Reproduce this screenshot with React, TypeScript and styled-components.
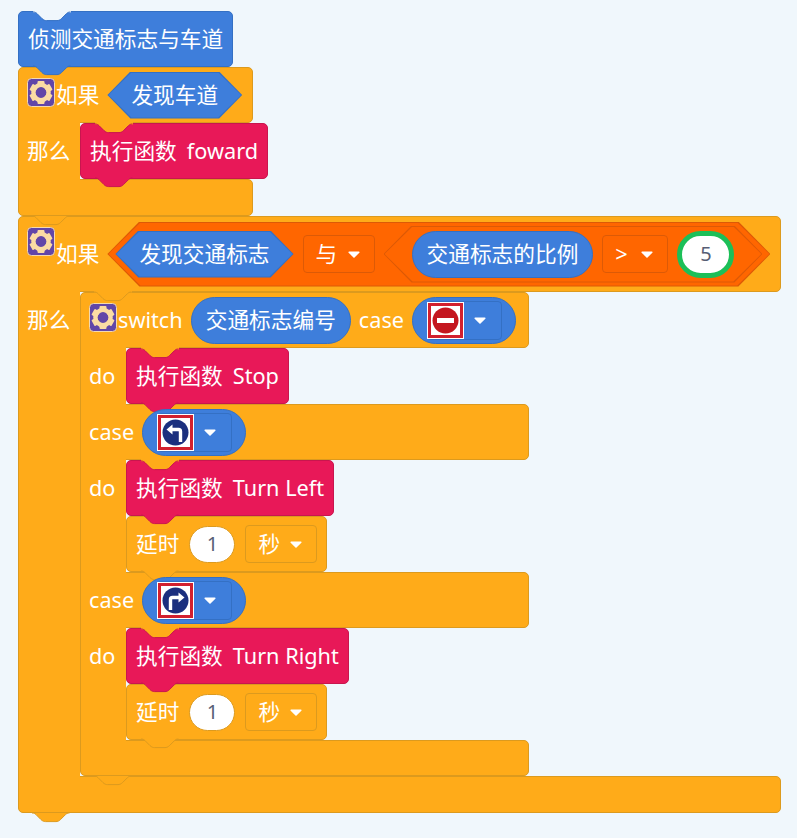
import React from 'react';
import styled, { createGlobalStyle } from 'styled-components';

const PAGE = '#f0f7fc';
const TONES = {
  control: { fill: '#ffab19', edge: '#dc9a1e' },
  sensing: { fill: '#3e7edb', edge: '#3470c4' },
  call: { fill: '#e81858', edge: '#c8164e' },
  logic: { fill: '#ff6600', edge: '#dc5a06' },
};
type Tone = keyof typeof TONES;

const CURVE = 'M0 1 C2 1 3 1.6 4 2.6 L9 7.6 C10.5 9.1 12 9.6 13.5 9.6 H24 C25.5 9.6 27 9.1 28.5 7.6 L33.5 2.6 C34.5 1.6 35.5 1 37.5 1';

const GlobalStyle = createGlobalStyle`
  html, body {
    margin: 0;
    background: ${PAGE};
  }
  * {
    box-sizing: border-box;
  }
`;

const Stage = styled.div`
  display: flex;
  flex-direction: column;
  align-items: flex-start;
  width: 797px;
  height: 838px;
  padding: 11px 0 0 18px;
  overflow: hidden;
  background: ${PAGE};
  color: #fff;
  font-family: 'Noto Sans', 'Noto Sans CJK SC', sans-serif;
  font-size: 21.7px;
  line-height: 1;
`;

const Block = styled.div<{ $tone: Tone; $pad?: number }>`
  position: relative;
  display: flex;
  align-items: center;
  gap: 10px;
  height: 56px;
  padding: 0 ${(p) => p.$pad ?? 9}px;
  background: ${(p) => TONES[p.$tone].fill};
  border: 1px solid ${(p) => TONES[p.$tone].edge};
  border-radius: 5px;
`;

const CBlock = styled.div<{ $width: number }>`
  position: relative;
  display: flex;
  flex-direction: column;
  width: ${(p) => p.$width}px;
`;

const Row = styled.div<{ $h?: number; $first?: boolean }>`
  display: flex;
  align-items: center;
  gap: 8px;
  height: ${(p) => p.$h ?? 56}px;
  padding-left: 8px;
  background: ${TONES.control.fill};
  border: 1px solid ${TONES.control.edge};
  border-radius: ${(p) => (p.$first ? '5px' : '0')} 5px 5px 0;
`;

const Arm = styled.div<{ $h: number }>`
  height: ${(p) => p.$h}px;
  background: ${TONES.control.fill};
  border: 1px solid ${TONES.control.edge};
  border-radius: 0 5px 5px 5px;
`;

const Body = styled.div`
  display: flex;
`;

const Gutter = styled.div<{ $width: number }>`
  position: relative;
  flex: none;
  width: ${(p) => p.$width}px;
  margin: -1px 0;
  padding-left: 8px;
  background: ${TONES.control.fill};
  border-left: 1px solid ${TONES.control.edge};
`;

const GutterLabel = styled.div`
  display: flex;
  align-items: center;
  height: 58px;
`;

const Stack = styled.div`
  display: flex;
  flex: none;
  flex-direction: column;
  align-items: flex-start;
`;

const Connector = styled.svg<{ $at: 'top' | 'bottom' }>`
  position: absolute;
  ${(p) => p.$at}: ${(p) => (p.$at === 'top' ? -1 : -10)}px;
  left: 14px;
  z-index: 2;
  width: 38px;
  height: 11px;
  overflow: visible;
`;

const Tab = ({ tone }: { tone: Tone }) => (
  <Connector $at="bottom" viewBox="0 0 38 11">
    <path d={CURVE} fill={TONES[tone].fill} stroke={TONES[tone].edge} strokeWidth="1" />
  </Connector>
);

const Notch = ({ cut, edge }: { cut: string; edge: string }) => (
  <Connector $at="top" viewBox="0 0 38 11">
    <rect x="0" y="-1" width="38" height="2.5" fill={cut} />
    <path d={CURVE} fill={cut} stroke={edge} strokeWidth="1" />
  </Connector>
);

const Hex = styled.div<{ $tone: Tone; $h: number; $tip: number; $pad: number }>`
  position: relative;
  z-index: 0;
  display: flex;
  flex: none;
  align-items: center;
  gap: 9px;
  height: ${(p) => p.$h}px;
  padding: 0 ${(p) => p.$pad}px;
  background: ${(p) => TONES[p.$tone].edge};
  clip-path: polygon(
    ${(p) => p.$tip}px 0,
    calc(100% - ${(p) => p.$tip}px) 0,
    100% 50%,
    calc(100% - ${(p) => p.$tip}px) 100%,
    ${(p) => p.$tip}px 100%,
    0 50%
  );

  &::before {
    content: '';
    position: absolute;
    inset: 1px;
    z-index: -1;
    background: ${(p) => TONES[p.$tone].fill};
    clip-path: polygon(
      ${(p) => p.$tip}px 0,
      calc(100% - ${(p) => p.$tip}px) 0,
      100% 50%,
      calc(100% - ${(p) => p.$tip}px) 100%,
      ${(p) => p.$tip}px 100%,
      0 50%
    );
  }
`;

const Pill = styled.div<{ $pad?: number }>`
  position: relative;
  z-index: 3;
  display: flex;
  flex: none;
  align-items: center;
  height: 47px;
  padding: 0 ${(p) => p.$pad ?? 14}px;
  background: ${TONES.sensing.fill};
  border: 1px solid ${TONES.sensing.edge};
  border-radius: 24px;
`;

const Dropdown = styled.div<{ $tone: Tone; $width: number }>`
  display: flex;
  flex: none;
  align-items: center;
  justify-content: space-between;
  width: ${(p) => p.$width}px;
  height: 38px;
  padding: 0 14px 0 12px;
  background: ${(p) => TONES[p.$tone].fill};
  border: 1px solid ${(p) => TONES[p.$tone].edge};
  border-radius: 4px;
`;

const ImageDropdown = styled.div`
  display: flex;
  flex: none;
  align-items: center;
  justify-content: space-between;
  width: 75px;
  height: 39px;
  padding-right: 15px;
  border: 1px solid ${TONES.sensing.edge};
  border-radius: 4px;
`;

const CaretSvg = styled.svg`
  flex: none;
  width: 12px;
  height: 7px;
`;

const Caret = () => (
  <CaretSvg viewBox="0 0 12 7">
    <path d="M1.2 1.2 H10.8 L6 5.8 Z" fill="#fff" stroke="#fff" strokeWidth="1.6" strokeLinejoin="round" />
  </CaretSvg>
);

const NumberField = styled.div<{ $ring?: boolean }>`
  display: flex;
  flex: none;
  align-items: center;
  justify-content: center;
  width: ${(p) => (p.$ring ? 57 : 46)}px;
  height: ${(p) => (p.$ring ? 47 : 37)}px;
  color: #575e75;
  font-size: 20px;
  background: #fff;
  border: ${(p) => (p.$ring ? `5px solid #1cbf58` : `1px solid ${TONES.control.edge}`)};
  border-radius: ${(p) => (p.$ring ? 24 : 19)}px;
`;

const GearSvg = styled.svg`
  flex: none;
  align-self: flex-start;
  width: 28px;
  height: 29px;
  margin: 10px -7px 0 0;
`;

const Gear = () => (
  <GearSvg viewBox="0 0 28 29">
    <rect x="0.5" y="0.5" width="27" height="28" rx="4" fill="#6246a8" stroke="#f4d9ae" />
    <g fill="#fbdca4">
      {[0, 60, 120, 180, 240, 300].map((deg) => (
        <rect key={deg} x="10.5" y="3" width="7" height="6" rx="1" transform={`rotate(${deg} 14 14.5)`} />
      ))}
    </g>
    <circle cx="14" cy="14.5" r="7.6" fill="none" stroke="#fbdca4" strokeWidth="4.4" />
  </GearSvg>
);

const SignSvg = styled.svg`
  flex: none;
  width: 37px;
  height: 37px;
  margin-left: -1px;
`;

const SignFrame = ({ children }: { children: React.ReactNode }) => (
  <SignSvg viewBox="0 0 37 37">
    <rect width="37" height="37" fill="#fff" />
    <rect x="2.5" y="2.5" width="32" height="32" fill="#fff" stroke="#d2202e" strokeWidth="3" />
    {children}
  </SignSvg>
);

const NoEntrySign = () => (
  <SignFrame>
    <circle cx="18.5" cy="18.5" r="13" fill="#c4161f" />
    <rect x="10" y="16" width="17" height="5" fill="#fff" />
  </SignFrame>
);

const TurnSign = ({ side }: { side: 'left' | 'right' }) => (
  <SignFrame>
    <circle cx="18.5" cy="18.5" r="13" fill="#1b2f7e" />
    <g transform={side === 'right' ? 'matrix(-1 0 0 1 37 0)' : undefined}>
      <path d="M23.5 28 V17.5 Q23.5 15.5 21.5 15.5 H14" fill="none" stroke="#fff" strokeWidth="3.4" />
      <path d="M9.5 15.5 L15.5 10.5 V20.5 Z" fill="#fff" />
    </g>
  </SignFrame>
);

const Call = ({ name }: { name: string }) => (
  <Block $tone="call">
    <Notch cut={TONES.control.fill} edge={TONES.call.edge} />
    <span>执行函数</span>
    <span>{name}</span>
    <Tab tone="call" />
  </Block>
);

const Delay = () => (
  <Block $tone="control">
    <span>延时</span>
    <NumberField>1</NumberField>
    <Dropdown $tone="control" $width={72}>
      <span>秒</span>
      <Caret />
    </Dropdown>
    <Tab tone="control" />
  </Block>
);

const App = () => (
  <Stage>
    <GlobalStyle />
    <Block $tone="sensing">
      <Notch cut={PAGE} edge={TONES.sensing.edge} />
      <span>侦测交通标志与车道</span>
      <Tab tone="sensing" />
    </Block>

    <CBlock $width={235}>
      <Row $first>
        <Gear />
        <span>如果</span>
        <Hex $tone="sensing" $h={47} $tip={23} $pad={24}>
          发现车道
        </Hex>
      </Row>
      <Body>
        <Gutter $width={62}>
          <GutterLabel>那么</GutterLabel>
        </Gutter>
        <Stack>
          <Call name="foward" />
        </Stack>
      </Body>
      <Arm $h={37} />
      <Tab tone="control" />
    </CBlock>

    <CBlock $width={763}>
      <Row $first $h={76}>
        <Gear />
        <span>如果</span>
        <Hex $tone="logic" $h={65} $tip={32} $pad={8}>
          <Hex $tone="sensing" $h={47} $tip={23} $pad={24}>
            发现交通标志
          </Hex>
          <Dropdown $tone="logic" $width={72}>
            <span>与</span>
            <Caret />
          </Dropdown>
          <Hex $tone="logic" $h={57} $tip={28} $pad={28}>
            <Pill $pad={14}>交通标志的比例</Pill>
            <Dropdown $tone="logic" $width={66}>
              <span>&gt;</span>
              <Caret />
            </Dropdown>
            <NumberField $ring>5</NumberField>
          </Hex>
        </Hex>
      </Row>
      <Body>
        <Gutter $width={62}>
          <GutterLabel>那么</GutterLabel>
        </Gutter>
        <Stack>
          <CBlock $width={449}>
            <Notch cut={TONES.control.fill} edge={TONES.control.edge} />
            <Row $first>
              <Gear />
              <span>switch</span>
              <Pill>交通标志编号</Pill>
              <span>case</span>
              <Pill $pad={13.5}>
                <ImageDropdown>
                  <NoEntrySign />
                  <Caret />
                </ImageDropdown>
              </Pill>
            </Row>
            <Body>
              <Gutter $width={46}>
                <GutterLabel>do</GutterLabel>
              </Gutter>
              <Stack>
                <Call name="Stop" />
              </Stack>
            </Body>
            <Row>
              <span>case</span>
              <Pill $pad={13.5}>
                <ImageDropdown>
                  <TurnSign side="left" />
                  <Caret />
                </ImageDropdown>
              </Pill>
            </Row>
            <Body>
              <Gutter $width={46}>
                <GutterLabel>do</GutterLabel>
              </Gutter>
              <Stack>
                <Call name="Turn Left" />
                <Delay />
              </Stack>
            </Body>
            <Row>
              <span>case</span>
              <Pill $pad={13.5}>
                <ImageDropdown>
                  <TurnSign side="right" />
                  <Caret />
                </ImageDropdown>
              </Pill>
            </Row>
            <Body>
              <Gutter $width={46}>
                <GutterLabel>do</GutterLabel>
              </Gutter>
              <Stack>
                <Call name="Turn Right" />
                <Delay />
              </Stack>
            </Body>
            <Arm $h={36} />
            <Tab tone="control" />
          </CBlock>
        </Stack>
      </Body>
      <Arm $h={37} />
      <Tab tone="control" />
    </CBlock>
  </Stage>
);

export default App;
